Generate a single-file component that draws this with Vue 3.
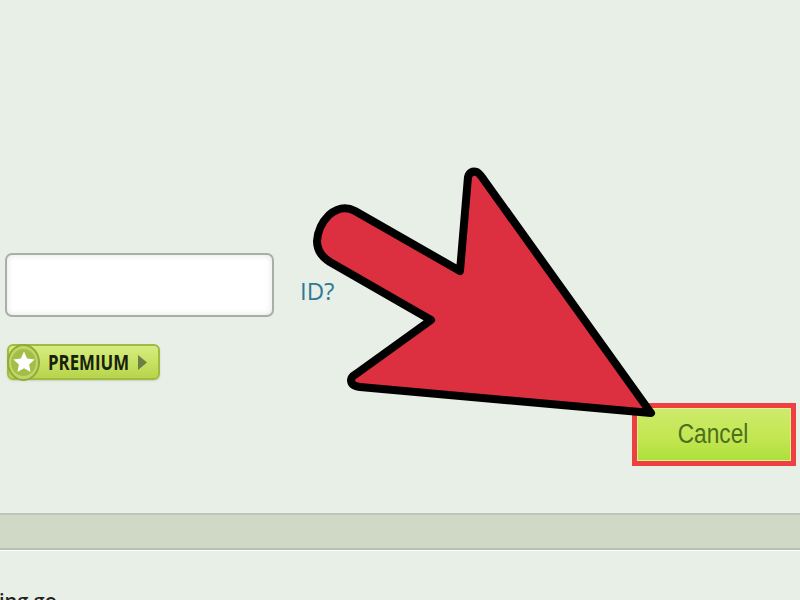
<template>
  <div class="page">
    <main class="content">
      <div class="form-row">
        <div class="field"></div>
        <a class="id-link">ID?</a>
      </div>
      <div class="premium">
        <span class="star-disc">
          <span class="star-inner">
            <svg viewBox="0 0 24 24" width="24" height="24">
              <path d="M12 1.5l3.1 7 7.6.9-5.6 5.1 1.5 7.5-6.6-3.8-6.6 3.8 1.5-7.5-5.6-5.1 7.6-.9z" fill="#fff" />
            </svg>
          </span>
        </span>
        <span class="premium-label">PREMIUM</span>
        <svg class="premium-caret" viewBox="0 0 9 15" width="9" height="15">
          <path d="M0 0l9 7.5-9 7.5z" fill="#6b7f48" />
        </svg>
      </div>
      <div class="actions">
        <button class="cancel"><span>Cancel</span></button>
      </div>
    </main>
    <div class="band"></div>
    <footer class="footer"><span>ing go</span></footer>
    <svg class="arrow" viewBox="0 0 800 600" width="800" height="600">
      <path
        d="M355 211L460 271L468 177Q470 170 477 172Q480 174 484 180L651 413L360 387Q351 386 351 380Q351 377 356 374L431 320L330 262Q317 254 317 241Q318 226 329 215Q342 204 355 211Z"
        fill="#dc3040"
        stroke="#000"
        stroke-width="8"
        stroke-linejoin="round"
      />
    </svg>
  </div>
</template>

<script setup>
</script>

<style>
html, body { margin: 0; background: #e8efe7; }
</style>

<style scoped>
.page {
  position: relative;
  width: 800px;
  height: 600px;
  overflow: hidden;
  display: flex;
  flex-direction: column;
  background: #e8efe7;
  font-family: "Liberation Sans", Arial, sans-serif;
}
.content {
  height: 513px;
  box-sizing: border-box;
  padding: 253px 4px 0 5px;
  display: flex;
  flex-direction: column;
}
.form-row {
  display: flex;
  align-items: center;
  gap: 26px;
}
.field {
  width: 269px;
  height: 64px;
  box-sizing: border-box;
  background: #fff;
  border: 2px solid #a9afa7;
  border-radius: 7px;
  box-shadow: inset 0 0 6px #e2e2e2;
}
.id-link {
  font-family: "Open Sans", sans-serif;
  font-size: 24px;
  color: #2f7a96;
  padding-top: 11px;
}
.premium {
  margin: 27px 0 0 2px;
  width: 153px;
  height: 36px;
  box-sizing: border-box;
  display: flex;
  align-items: center;
  position: relative;
  border: 2px solid #a0bb3f;
  border-radius: 6px;
  background: linear-gradient(#d6ec80, #c6e160 55%, #b6d44e);
  box-shadow: 0 1px 2px #c9d3bd;
}
.star-disc {
  width: 33px;
  height: 37px;
  margin: 0 0 0 -2px;
  box-sizing: border-box;
  flex: none;
  display: flex;
  align-items: center;
  justify-content: center;
  border-radius: 50%;
  border: 2px solid #8faa3a;
  background: #c0d768;
}
.star-inner {
  width: 25px;
  height: 27px;
  display: flex;
  align-items: center;
  justify-content: center;
  border-radius: 50%;
  background: #a3bd46;
}
.premium-label {
  margin-left: 8px;
  display: inline-block;
  width: 80px;
  font-family: "Open Sans", sans-serif;
  font-weight: 700;
  font-size: 21px;
  color: #17210e;
  white-space: nowrap;
  transform: scaleX(0.8);
  transform-origin: left center;
}
.premium-caret {
  margin-left: 10px;
}
.actions {
  display: flex;
  justify-content: flex-end;
  margin-top: 23px;
}
.cancel {
  width: 164px;
  height: 63px;
  box-sizing: border-box;
  padding: 0 2px 0 0;
  border: 5px solid #ee4040;
  background: linear-gradient(#cdeb6c, #c2e650 60%, #abe03a);
  box-shadow: inset 0 0 0 1px #dff08e;
  color: #4c6f1f;
  font-family: "Liberation Sans", Arial, sans-serif;
  font-size: 27px;
}
.cancel span {
  display: inline-block;
  transform: scaleX(0.84);
}
.band {
  height: 37px;
  box-sizing: border-box;
  background: #d0d8c6;
  border-top: 2px solid #bec5b9;
  border-bottom: 2px solid #b9bfb5;
}
.footer {
  flex: 1;
  border-top: 1px solid #fff;
  position: relative;
}
.footer span {
  position: absolute;
  left: -1px;
  top: 36px;
  font-family: "Open Sans", sans-serif;
  font-size: 20px;
  font-weight: 600;
  color: #222;
}
.arrow {
  position: absolute;
  left: 0;
  top: 0;
  pointer-events: none;
}
</style>
